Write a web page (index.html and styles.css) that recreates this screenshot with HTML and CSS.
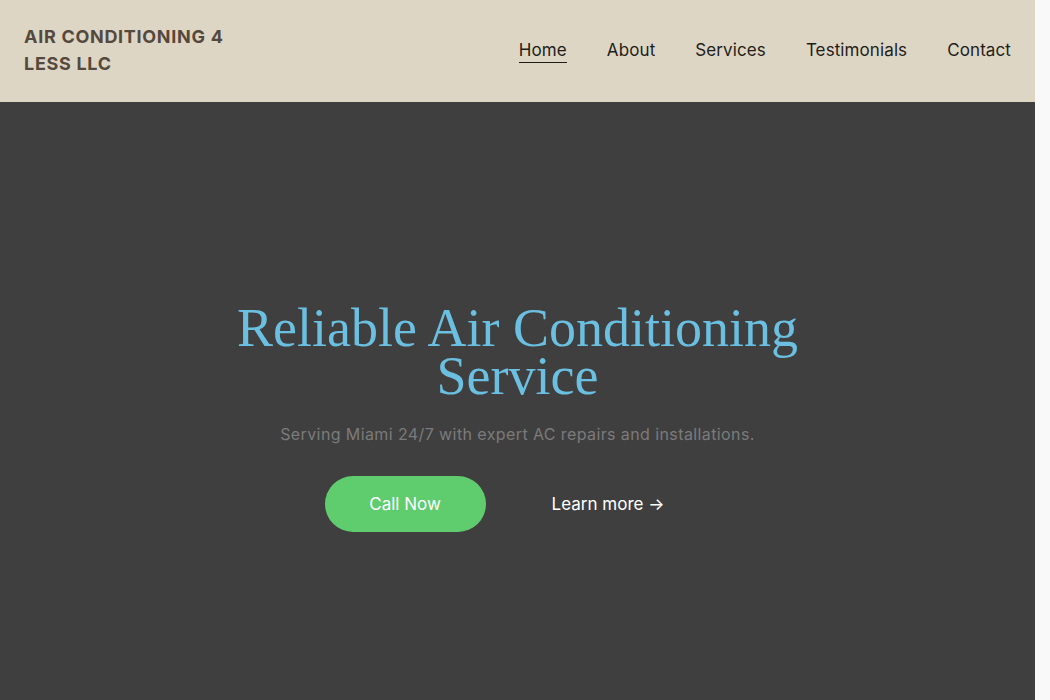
FILE: index.html
```html
<!DOCTYPE html>
<html lang="en">
<head>
<meta charset="utf-8">
<title>Air Conditioning 4 Less LLC</title>
<link rel="stylesheet" href="styles.css">
</head>
<body>
<header class="site-header">
  <div class="logo">AIR CONDITIONING 4 LESS LLC</div>
  <nav class="nav">
    <a class="nav-link active" href="#">Home</a>
    <a class="nav-link" href="#">About</a>
    <a class="nav-link" href="#">Services</a>
    <a class="nav-link" href="#">Testimonials</a>
    <a class="nav-link" href="#">Contact</a>
  </nav>
</header>
<main>
  <section class="hero">
    <h1 class="hero-title">Reliable Air Conditioning Service</h1>
    <p class="hero-sub">Serving Miami 24/7 with expert AC repairs and installations.</p>
    <div class="hero-actions">
      <a class="btn-call" href="#">Call Now</a>
      <a class="btn-more" href="#">Learn more →</a>
    </div>
  </section>
  <section class="below"></section>
</main>
</body>
</html>
```
FILE: styles.css
```css
* { box-sizing: border-box; }
html { background: #f9f9f9; }
html, body { margin: 0; padding: 0; }
body {
  width: 1035px;
  font-family: "Inter", "Open Sans", sans-serif;
  background: #3f3f3f;
}
a { text-decoration: none; }
.site-header {
  background: #ded6c5;
  height: 102px;
  display: flex;
  align-items: center;
  justify-content: space-between;
  padding: 0 24px;
}
.logo {
  width: 225px;
  font-weight: 700;
  font-size: 18px;
  line-height: 27px;
  color: #55493d;
  letter-spacing: 0.7px;
  margin-top: -2px;
}
.nav {
  display: flex;
  gap: 40px;
  margin-top: 1px;
}
.nav-link {
  color: #1f1d1a;
  font-size: 17px;
  letter-spacing: 0.1px;
  padding-bottom: 2px;
  border-bottom: 1px solid transparent;
}
.nav-link.active { border-bottom-color: #1f1d1a; }
.hero {
  height: 636px;
  display: flex;
  flex-direction: column;
  align-items: center;
  justify-content: center;
  text-align: center;
  padding-bottom: 4px;
}
.hero-title {
  font-family: "Liberation Serif", serif;
  font-weight: 400;
  font-size: 54px;
  line-height: 48px;
  color: #6bbfe0;
  margin: 0;
  max-width: 620px;
}
.hero-sub {
  color: #7b7b7b;
  font-size: 16px;
  letter-spacing: 0.4px;
  margin: 24px 0 32px;
}
.hero-actions {
  display: flex;
  align-items: center;
  gap: 20px;
}
.btn-call {
  background: #5fcc6e;
  color: #fff;
  font-size: 17px;
  width: 161px;
  height: 56px;
  border-radius: 28px;
  display: flex;
  align-items: center;
  justify-content: center;
}
.btn-more {
  color: #fff;
  font-size: 17px;
  padding: 0 46px;
}
.below {
  height: 860px;
  background: #3f3f3f;
}
```
